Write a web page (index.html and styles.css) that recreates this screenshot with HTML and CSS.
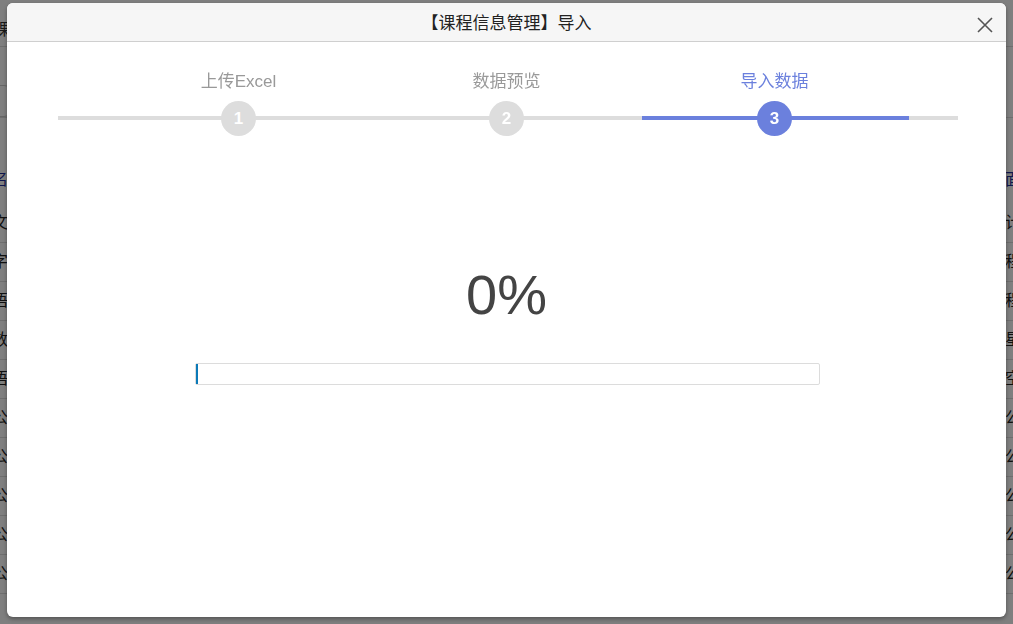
FILE: index.html
```html
<!DOCTYPE html>
<html lang="zh-CN">
<head>
<meta charset="utf-8">
<title>课程信息管理</title>
<link rel="stylesheet" href="styles.css">
</head>
<body>
<div class="page">
  <div class="page-head">课程信息管理</div>
  <div class="page-tools"><span class="search-box"></span></div>
  <div class="page-table">
    <div class="row link"><span>名</span><span>面</span></div>
    <div class="row"><span>文</span><span>计</span></div>
    <div class="row"><span>字</span><span>程</span></div>
    <div class="row"><span>语</span><span>程</span></div>
    <div class="row"><span>数</span><span>星</span></div>
    <div class="row"><span>语</span><span>空</span></div>
    <div class="row"><span>公</span><span>公</span></div>
    <div class="row"><span>公</span><span>公</span></div>
    <div class="row"><span>公</span><span>公</span></div>
    <div class="row"><span>公</span><span>公</span></div>
    <div class="row"><span>公</span><span>公</span></div>
  </div>
</div>
<div class="mask"></div>
<div class="modal">
  <div class="modal-header">
    <span class="modal-title">【课程信息管理】导入</span>
    <span class="modal-close">
      <svg width="16" height="16" viewBox="0 0 16 16"><path d="M1 1 L15 15 M15 1 L1 15" stroke="#555" stroke-width="1.6" fill="none"/></svg>
    </span>
  </div>
  <div class="modal-body">
    <div class="steps">
      <div class="step">
        <div class="step-label">上传Excel</div>
        <div class="step-dot">1</div>
      </div>
      <div class="step">
        <div class="step-label">数据预览</div>
        <div class="step-dot">2</div>
      </div>
      <div class="step active">
        <div class="step-label">导入数据</div>
        <div class="step-dot">3</div>
      </div>
    </div>
    <div class="percent">0%</div>
    <div class="progress"><div class="progress-fill"></div></div>
  </div>
</div>
</body>
</html>
```
FILE: styles.css
```css
html, body {
  margin: 0;
  padding: 0;
  height: 100%;
  overflow: hidden;
}
body {
  background: #ffffff;
  font-family: "Liberation Sans", "Noto Sans CJK SC", sans-serif;
  color: #333;
}
.page-head {
  height: 46px;
  line-height: 60px;
  font-size: 16px;
  color: #333;
  margin-left: -6px;
  border-bottom: 1px solid #ddd;
  overflow: hidden;
  white-space: nowrap;
}
.page-tools {
  height: 70px;
  border-bottom: 1px solid #ddd;
  display: flex;
  align-items: center;
}
.search-box {
  display: block;
  width: 200px;
  height: 30px;
  margin-left: -190px;
  margin-top: 38px;
  border: 1px solid #ccc;
  border-radius: 8px;
}
.page-table {
  margin-top: 56px;
}
.row {
  height: 38px;
  line-height: 38px;
  border-bottom: 1px solid #ddd;
  font-size: 16px;
  color: #222;
  white-space: nowrap;
  display: flex;
  justify-content: space-between;
}
.row span:first-child {
  margin-left: -8px;
}
.row span:last-child {
  margin-right: -8px;
}
.row.link {
  color: #1f2f9a;
  border-bottom: none;
  height: 30px;
  line-height: 12px;
}
.mask {
  position: fixed;
  inset: 0;
  background: rgba(0, 0, 0, 0.5);
}
.modal {
  position: absolute;
  left: 7px;
  top: 3px;
  width: 999px;
  height: 614px;
  background: #fff;
  border-radius: 6px;
  box-shadow: 0 2px 4px rgba(0, 0, 0, 0.35);
  overflow: hidden;
  display: flex;
  flex-direction: column;
}
.modal-header {
  height: 38px;
  flex: none;
  background: #f6f6f6;
  border-bottom: 1px solid #cfcfcf;
  display: flex;
  align-items: center;
  justify-content: center;
  position: relative;
}
.modal-title {
  font-family: "Noto Sans CJK SC", sans-serif;
  font-size: 17px;
  color: #222;
  line-height: 22px;
}
.modal-close {
  position: absolute;
  right: 13px;
  top: 14px;
  width: 16px;
  height: 16px;
  display: block;
}
.modal-close svg {
  display: block;
}
.modal-body {
  flex: 1;
  display: flex;
  flex-direction: column;
  align-items: center;
  padding-top: 26px;
}
.steps {
  width: 804px;
  display: flex;
  position: relative;
}
.steps::before {
  content: "";
  position: absolute;
  left: -47px;
  right: -49px;
  top: 48px;
  height: 4px;
  background: #dddddd;
}
.step {
  flex: 1;
  display: flex;
  flex-direction: column;
  align-items: center;
  position: relative;
}
.step.active::before {
  content: "";
  position: absolute;
  left: 1px;
  right: 0;
  top: 48px;
  height: 4px;
  background: #6b80dd;
}
.step-label {
  font-family: "Liberation Sans", "Noto Sans CJK SC", sans-serif;
  font-size: 17px;
  line-height: 24px;
  margin-top: 2px;
  color: #999;
}
.step.active .step-label {
  color: #6b80dd;
}
.step-dot {
  margin-top: 7px;
  width: 35px;
  height: 35px;
  border-radius: 50%;
  background: #dddddd;
  color: #fff;
  font-weight: bold;
  font-size: 17px;
  line-height: 35px;
  text-align: center;
  position: relative;
  z-index: 1;
}
.step.active .step-dot {
  background: #6b80dd;
}
.percent {
  margin-top: 127px;
  font-family: "Liberation Sans", sans-serif;
  font-size: 56px;
  line-height: 64px;
  color: #444;
}
.progress {
  margin-top: 36px;
  width: 623px;
  height: 20px;
  border: 1px solid #dcdcdc;
  border-radius: 2px;
  margin-left: 1px;
  display: flex;
}
.progress-fill {
  width: 2px;
  background: #0b7ab8;
}
```
